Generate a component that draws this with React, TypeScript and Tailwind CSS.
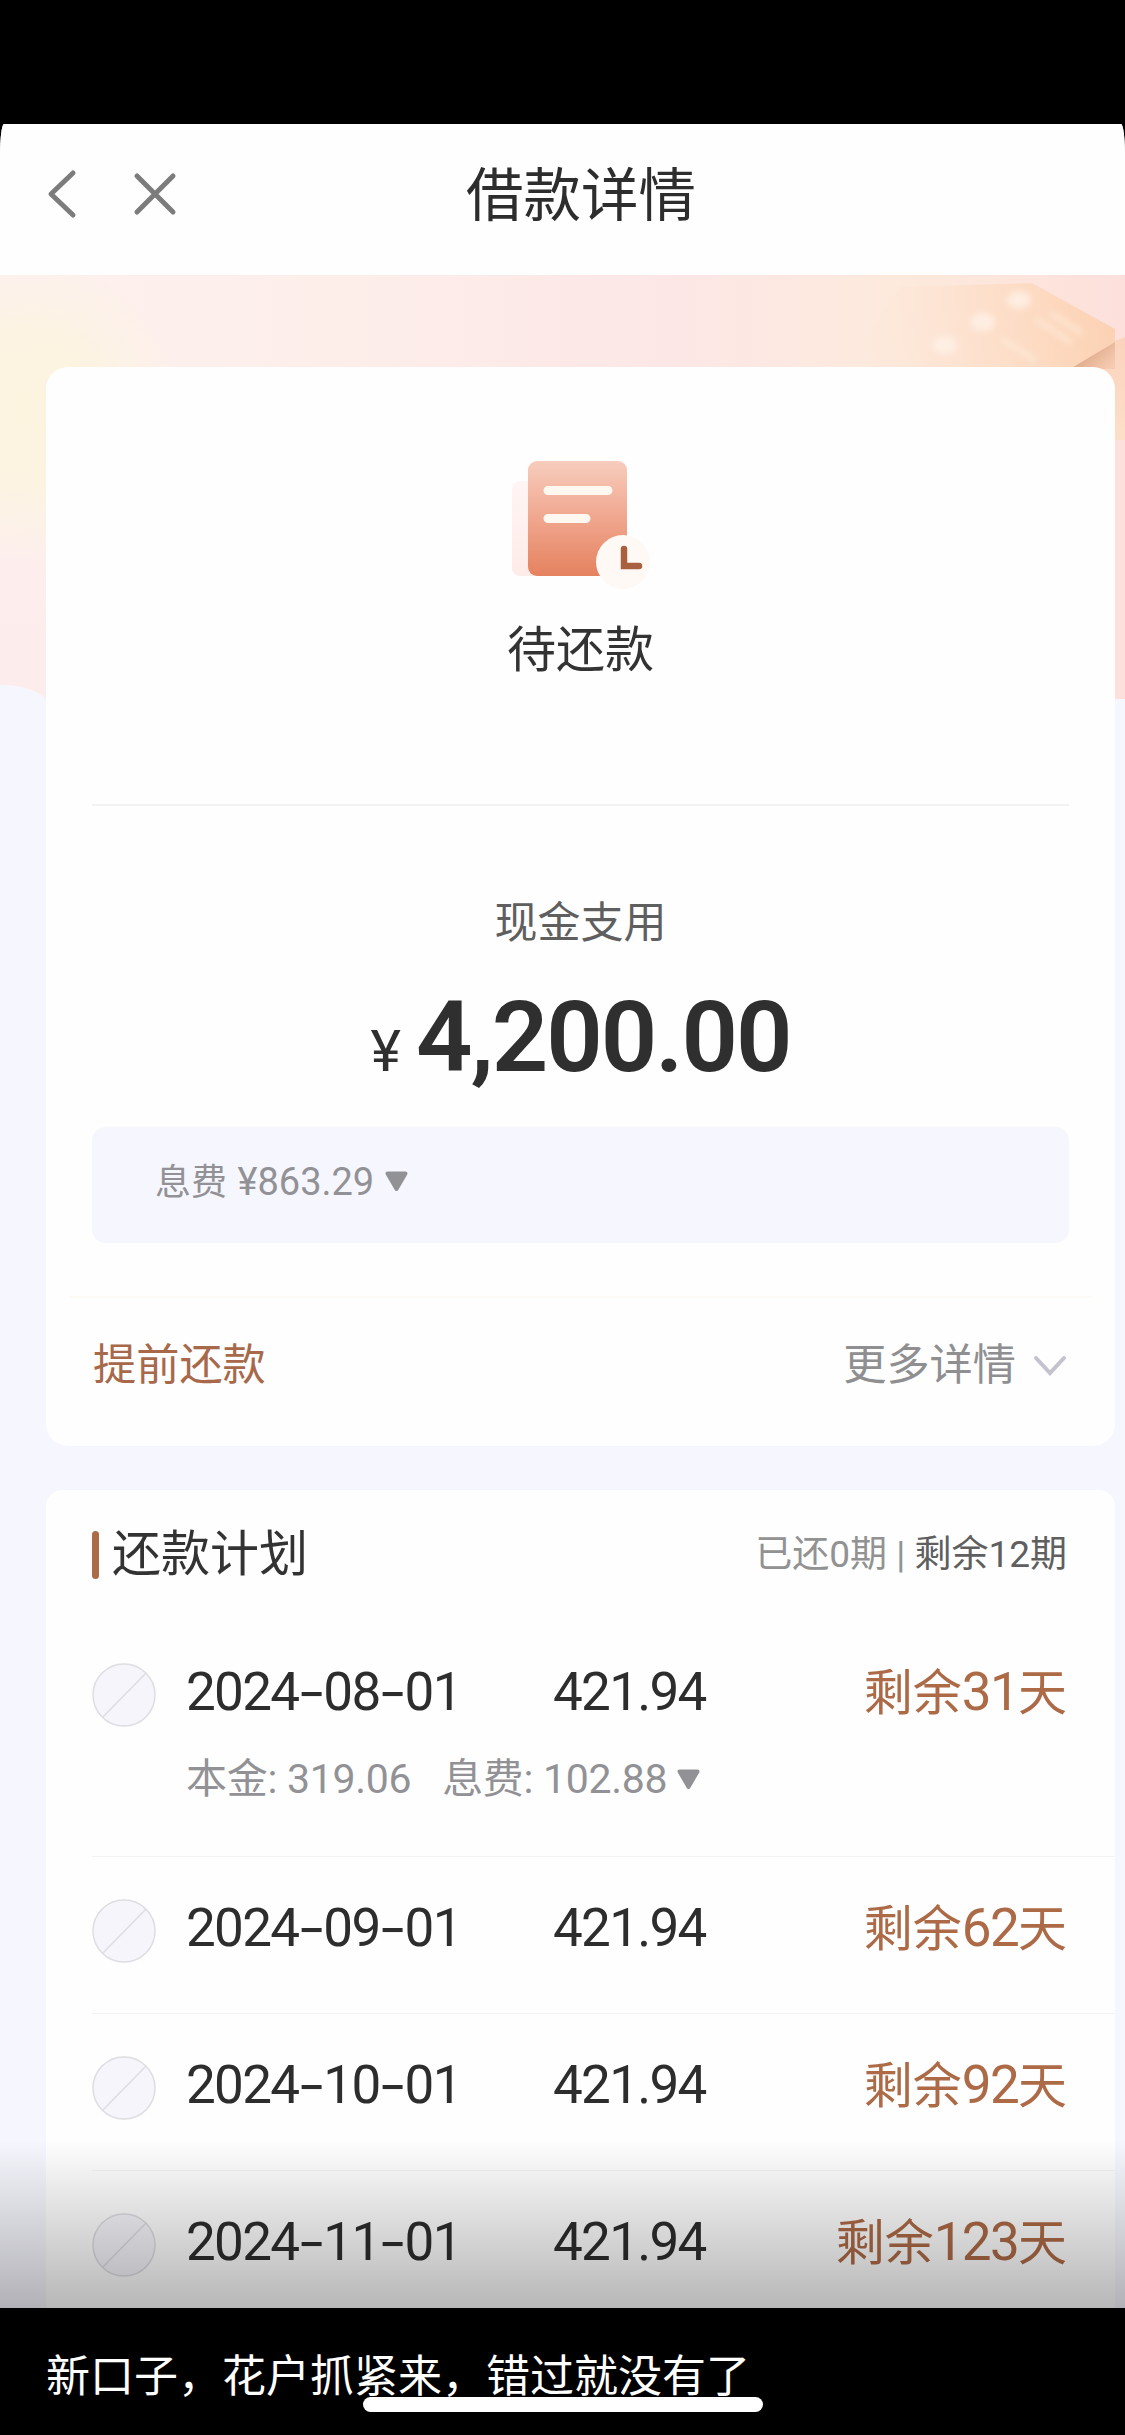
import React from 'react';

type Installment = { date: string; amount: string; days: string; detail?: { principal: string; fee: string } };

const PLAN: Installment[] = [
  { date: '2024-08-01', amount: '421.94', days: '31', detail: { principal: '319.06', fee: '102.88' } },
  { date: '2024-09-01', amount: '421.94', days: '62' },
  { date: '2024-10-01', amount: '421.94', days: '92' },
  { date: '2024-11-01', amount: '421.94', days: '123' },
];

function Triangle() {
  return (
    <svg width="23" height="21" viewBox="0 0 23 21" className="shrink-0">
      <path d="M2.5 2.5H20.5L11.5 18Z" fill="#929296" stroke="#929296" strokeWidth="4" strokeLinejoin="round" />
    </svg>
  );
}

function DateText({ value }: { value: string }) {
  return (
    <span className="w-[367px] text-[53px] tracking-[-1.7px]">
      {value.split('-').map((part, i) => (
        <React.Fragment key={i}>
          {i > 0 && (
            <span className="mx-[1.5px] inline-block scale-x-125 font-[Inter] text-[50px] tracking-[-1px]">-</span>
          )}
          {part}
        </React.Fragment>
      ))}
    </span>
  );
}

function EmptyMark() {
  return (
    <svg width="64" height="64" viewBox="0 0 64 64" className="mr-[30px] shrink-0">
      <circle cx="32" cy="32" r="31" fill="#f5f5fb" stroke="#dddde2" strokeWidth="1.5" />
      <path d="M11 54L54 10" stroke="#dddde2" strokeWidth="1.5" />
    </svg>
  );
}

function Row({ item }: { item: Installment }) {
  return (
    <div className={item.detail ? 'h-[237px] pt-[2px]' : 'h-[156px]'}>
      <div className="flex h-[148px] items-center pl-[46px] pr-[48px] text-[#2d2d2d]">
        <EmptyMark />
        <div className="flex grow items-center pb-[6px]">
          <DateText value={item.date} />
          <span className="text-[53px] tracking-[-1.7px]">{item.amount}</span>
          <span className="ml-auto text-[49px] text-[#ad6a46]">
            剩余<span className="text-[53px] tracking-[-1.7px]">{item.days}</span>天
          </span>
        </div>
      </div>
      {item.detail && (
        <div className="-mt-[11px] flex h-[42px] items-center pl-[140px] text-[41px] tracking-[-0.3px] text-[#929296]">
          <span>本金: {item.detail.principal}</span>
          <span className="ml-[31px] mr-[10px]">息费: {item.detail.fee}</span>
          <Triangle />
        </div>
      )}
    </div>
  );
}

function Banner() {
  return (
    <svg width="1125" height="424" viewBox="0 0 1125 424" className="absolute left-0 top-0">
      <defs>
        <linearGradient id="sky" x1="0" y1="0" x2="1" y2="0">
          <stop offset="0" stopColor="#fdf1ee" />
          <stop offset=".3" stopColor="#fdeeea" />
          <stop offset=".6" stopColor="#fce7e6" />
          <stop offset=".8" stopColor="#fdeadc" />
          <stop offset="1" stopColor="#fde0dc" />
        </linearGradient>
        <linearGradient id="blush" x1="0" y1="0" x2="0" y2="1">
          <stop offset=".5" stopColor="#fdecec" stopOpacity="0" />
          <stop offset=".85" stopColor="#fdecec" />
        </linearGradient>
        <radialGradient id="sun" gradientUnits="userSpaceOnUse" cx="30" cy="135" r="150">
          <stop offset="0" stopColor="#fcf4df" />
          <stop offset=".5" stopColor="#fcf4df" stopOpacity=".8" />
          <stop offset="1" stopColor="#fcf4df" stopOpacity="0" />
        </radialGradient>
        <linearGradient id="ticket" gradientUnits="userSpaceOnUse" x1="860" y1="80" x2="1110" y2="50">
          <stop offset="0" stopColor="#fde6d6" stopOpacity="0" />
          <stop offset=".5" stopColor="#fde0cc" />
          <stop offset="1" stopColor="#fcd2b4" />
        </linearGradient>
        <linearGradient id="side" x1="0" y1="0" x2="0" y2="1">
          <stop offset="0" stopColor="#fbd3bd" />
          <stop offset="1" stopColor="#fddfc8" />
        </linearGradient>
        <linearGradient id="fold" gradientUnits="userSpaceOnUse" x1="1085" y1="78" x2="1105" y2="98">
          <stop offset="0" stopColor="#dfab8a" />
          <stop offset="1" stopColor="#f7cbb2" />
        </linearGradient>
        <filter id="soft" x="-30%" y="-30%" width="160%" height="160%">
          <feGaussianBlur stdDeviation="3" />
        </filter>
      </defs>
      <rect width="1125" height="424" fill="url(#sky)" />
      <rect width="60" height="424" fill="url(#blush)" />
      <rect width="300" height="424" fill="url(#sun)" />
      <path d="M840 100L900 12L1032 8L1115 54V66L1072 100Z" fill="url(#ticket)" />
      <path d="M1068 95L1115 66L1125 62V165H1100V95Z" fill="url(#side)" />
      <path d="M1070 94L1115 67V94Z" fill="url(#fold)" />
      <g filter="url(#soft)">
        <g fill="#fff3ea" opacity=".75">
          <ellipse cx="1019" cy="25" rx="12" ry="9" />
          <ellipse cx="983" cy="47" rx="12" ry="9" />
          <ellipse cx="945" cy="70" rx="12" ry="9" />
        </g>
        <path d="M1036 44L1072 68M1050 38L1082 58M1002 64L1036 86" stroke="#fff1e2" strokeWidth="4" opacity=".7" />
      </g>
      <path d="M0 410C20 410 36 414 46 424H0Z" fill="#f6f6fe" />
    </svg>
  );
}

export default function App() {
  return (
    <div className="flex h-[2435px] w-[1125px] flex-col overflow-hidden bg-black font-['Roboto','Noto_Sans_CJK_SC',sans-serif] leading-none whitespace-nowrap">
      <div className="h-[124px] shrink-0" />
      <main className="relative h-[2184px] shrink-0 overflow-hidden rounded-t-[4px_32px] bg-[#f6f6fe]">
        <header className="relative h-[151px] bg-[#fefefe]">
          <div className="flex h-[139px] items-center pl-[46px]">
            <svg width="32" height="50" viewBox="0 0 32 50" fill="none" stroke="#7c7c7c" strokeWidth="5" strokeLinecap="round" strokeLinejoin="round">
              <path d="M27 4L5 25L27 46" />
            </svg>
            <svg width="44" height="44" viewBox="0 0 44 44" fill="none" stroke="#7c7c7c" strokeWidth="5" strokeLinecap="round" className="ml-[55px]">
              <path d="M4 4L40 40M40 4L4 40" />
            </svg>
            <h1 className="ml-[289px] pt-[7px] text-[57.500px] text-[#2d2d2d]">借款详情</h1>
          </div>
        </header>
        <div className="relative pl-[46px] pr-[10px] pt-[92px]">
          <Banner />
          <section className="relative flex h-[1079px] flex-col rounded-[22px] bg-[#fefefe] px-[46px]">
            <div className="flex h-[439px] flex-col items-center border-b-2 border-[#f2f2f4] pt-[90px]">
              <svg width="150" height="140" viewBox="0 0 150 140">
                <defs>
                  <linearGradient id="paper" x1="0" y1="0" x2="0" y2="1">
                    <stop offset="0" stopColor="#f7cdbd" />
                    <stop offset=".5" stopColor="#f0a68e" />
                    <stop offset="1" stopColor="#e5825f" />
                  </linearGradient>
                  <linearGradient id="back" x1="0" y1="0" x2="0" y2="1">
                    <stop offset="0" stopColor="#fff5f4" />
                    <stop offset="1" stopColor="#fdebe8" />
                  </linearGradient>
                </defs>
                <rect x="6" y="24" width="40" height="95" rx="8" fill="url(#back)" />
                <rect x="22" y="4" width="99" height="115" rx="9" fill="url(#paper)" />
                <path d="M42 33.500H102M42 61.500H80" stroke="#fff8f1" strokeWidth="9" strokeLinecap="round" />
                <circle cx="117" cy="105" r="27" fill="#fff9f5" />
                <path d="M118 92V109H133" fill="none" stroke="#a9603f" strokeWidth="6.500" strokeLinecap="round" />
              </svg>
              <div className="mt-[29px] text-[49px] text-[#333]">待还款</div>
            </div>
            <div className="mt-[96px] text-center text-[43px] text-[#5f5f5f]">现金支用</div>
            <div className="mt-[43px] flex h-[101px] items-baseline justify-center text-[#2f2f2f]">
              <span className="mr-[15px] text-[58px]">¥</span>
              <span className="text-[99px] font-semibold tracking-[-2px]">4,200.00</span>
            </div>
            <div className="mt-[38px] flex h-[116px] shrink-0 items-center rounded-[14px] bg-[#f6f6fe] pb-[7px] pl-[63px] text-[38px] text-[#929296]">
              <span className="mr-[11px]"><span className="text-[36px]">息费</span>{' '}<span className="ml-px">¥863.29</span></span>
              <Triangle />
            </div>
            <div className="-mx-[23px] mt-[53px] h-[2px] shrink-0 bg-[#fdfaf6]" />
            <div className="flex h-[136px] items-center text-[43.200px]">
              <span className="ml-px text-[#a7694a]">提前还款</span>
              <span className="ml-auto text-[#8f8f92]">更多详情</span>
              <svg width="34" height="22" viewBox="0 0 34 22" className="ml-[17px] mr-[2px]" fill="none" stroke="#c3c2ce" strokeWidth="4" strokeLinecap="round">
                <path d="M3 3L17 18L31 3" />
              </svg>
            </div>
          </section>
          <section className="relative mt-[44px] h-[900px] rounded-t-[16px] bg-[#fefefe]">
            <div className="flex h-[129px] items-center pl-[46px] pr-[48px]">
              <span className="h-[48px] w-[7px] rounded-full bg-[#ad6a46]" />
              <h2 className="ml-[13px] text-[49px] text-[#333]">还款计划</h2>
              <div className="ml-auto text-[37px] text-[#929292]">
                已还0期 | <span className="text-[#5f5f5f]">剩余12期</span>
              </div>
            </div>
            {PLAN.map((item, i) => (
              <React.Fragment key={item.date}>
                {i > 0 && <div className="ml-[46px] h-0 border-b border-[#f3f3f5]" />}
                <Row item={item} />
              </React.Fragment>
            ))}
          </section>
        </div>
        <div className="absolute inset-x-0 bottom-0 h-[168px] bg-linear-to-b from-black/0 to-black/28" />
      </main>
      <footer className="relative h-[127px] shrink-0 bg-black pl-[46px] pt-[47px] text-[44px] text-white">
        新口子，花户抓紧来，错过就没有了
        <div className="absolute left-[363px] top-[89px] h-[15px] w-[400px] rounded-full bg-white" />
      </footer>
    </div>
  );
}
